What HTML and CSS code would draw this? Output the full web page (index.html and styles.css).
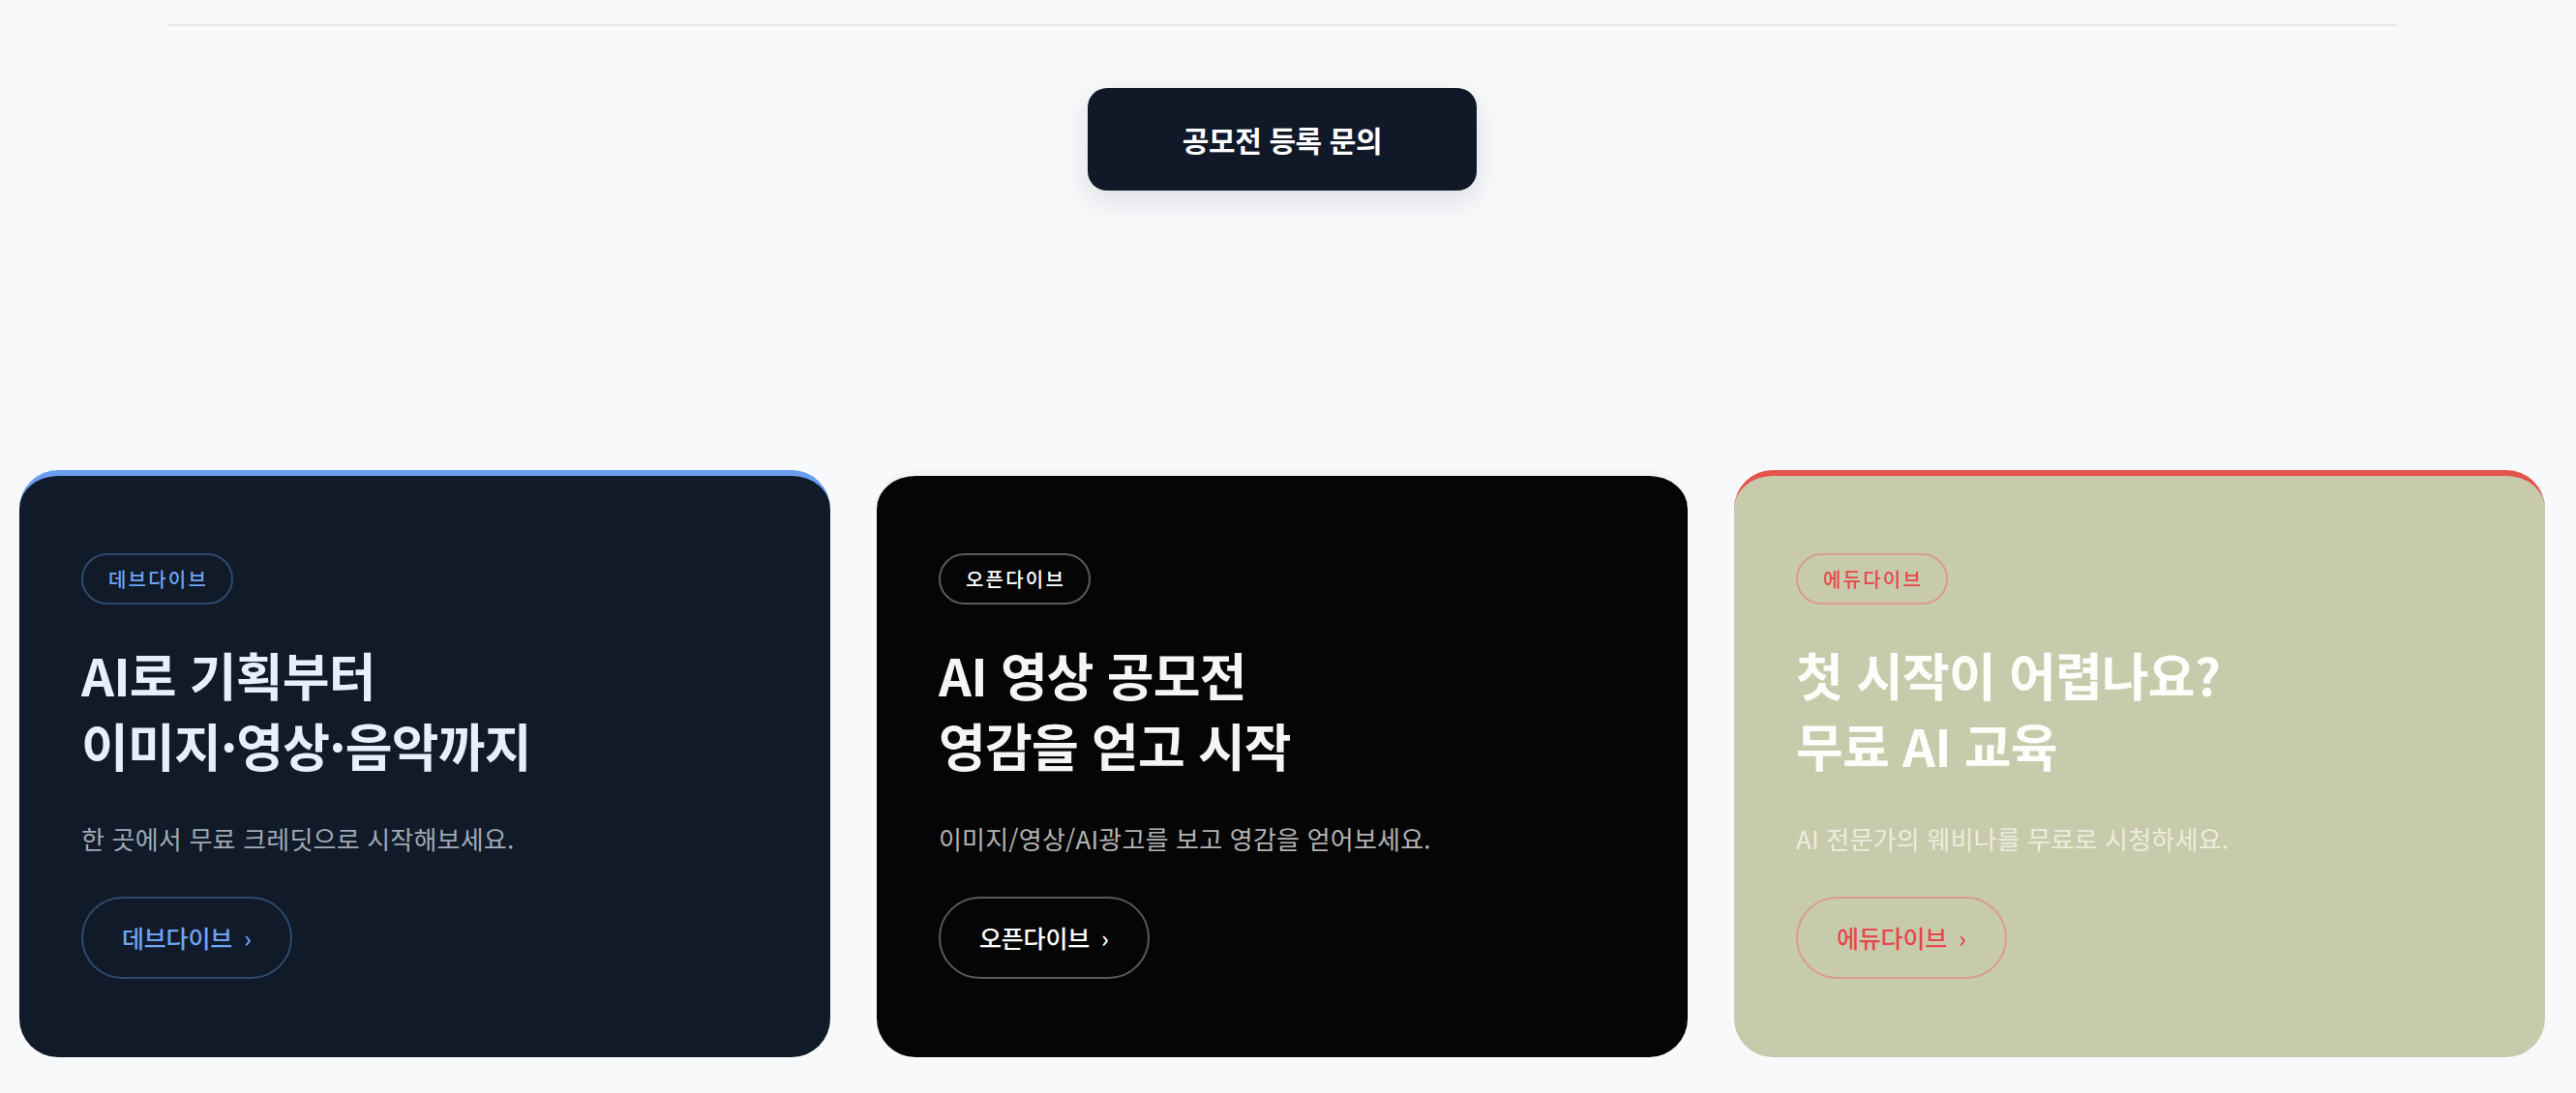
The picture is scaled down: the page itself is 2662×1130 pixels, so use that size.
FILE: index.html
```html
<!DOCTYPE html>
<html lang="ko">
<head>
<meta charset="utf-8">
<title>다이브</title>
<link rel="stylesheet" href="styles.css">
</head>
<body>
<div class="page">
  <hr class="divider">
  <div class="cta-row">
    <a class="cta" href="#">공모전 등록 문의</a>
  </div>
  <section class="cards">
    <article class="card card-dev">
      <span class="badge">데브다이브</span>
      <h2 class="title">AI로 기획부터<br>이미지·영상·음악까지</h2>
      <p class="desc">한 곳에서 무료 크레딧으로 시작해보세요.</p>
      <a class="more" href="#">데브다이브 <span class="chev">›</span></a>
    </article>
    <article class="card card-open">
      <span class="badge">오픈다이브</span>
      <h2 class="title">AI 영상 공모전<br>영감을 얻고 시작</h2>
      <p class="desc">이미지/영상/AI광고를 보고 영감을 얻어보세요.</p>
      <a class="more" href="#">오픈다이브 <span class="chev">›</span></a>
    </article>
    <article class="card card-edu">
      <span class="badge">에듀다이브</span>
      <h2 class="title">첫 시작이 어렵나요?<br>무료 AI 교육</h2>
      <p class="desc">AI 전문가의 웨비나를 무료로 시청하세요.</p>
      <a class="more" href="#">에듀다이브 <span class="chev">›</span></a>
    </article>
  </section>
</div>
</body>
</html>
```
FILE: styles.css
```css
* { box-sizing: border-box; }
html, body { margin: 0; padding: 0; }
body {
  background: #f8f9fb;
  font-family: "Noto Sans CJK KR", "Noto Sans", sans-serif;
  padding-right: 12px;
  min-height: 1130px;
}
.page {
  display: flex;
  flex-direction: column;
  align-items: center;
}
.divider {
  width: 2304px;
  margin: 25px 0 0;
  border: 0;
  border-top: 2px solid #e5e7eb;
  height: 0;
}
.cta-row {
  margin-top: 64px;
  display: flex;
  justify-content: center;
}
.cta {
  display: block;
  background: #111827;
  color: #ffffff;
  text-decoration: none;
  font-size: 30px;
  font-weight: 700;
  line-height: 42px;
  padding: 32px 98px;
  border-radius: 20px;
  box-shadow: 0 10px 30px rgba(17, 24, 39, 0.12);
  letter-spacing: -0.4px;
}
.cards {
  margin-top: 289px;
  width: 100%;
  padding: 0 20px;
  display: grid;
  grid-template-columns: repeat(3, 1fr);
  gap: 48px;
}
.card {
  border-radius: 40px;
  border-top: 6px solid;
  padding: 80px 64px 81px;
  display: flex;
  flex-direction: column;
  align-items: flex-start;
}
.badge {
  display: inline-block;
  border: 2px solid;
  border-radius: 999px;
  font-size: 20px;
  font-weight: 500;
  line-height: 25px;
  padding: 12px 24px 12px 26px;
  letter-spacing: 2.2px;
}
.title {
  margin: 36px 0 0;
  font-size: 53px;
  font-weight: 700;
  line-height: 73px;
  letter-spacing: -0.8px;
}
.desc {
  margin: 40px 0 0;
  font-size: 26px;
  font-weight: 400;
  line-height: 40px;
  letter-spacing: 0.2px;
}
.more {
  margin-top: 40px;
  display: inline-flex;
  align-items: center;
  gap: 12px;
  border: 2px solid;
  border-radius: 999px;
  padding: 22px 40px 23px;
  font-size: 25px;
  font-weight: 500;
  line-height: 36px;
  text-decoration: none;
  letter-spacing: -0.2px;
}
.chev { font-size: 25px; }

.card-dev { background: #101a28; border-top-color: #6b9ef0; }
.card-dev .badge { border-color: #2f4a6e; color: #6fa3f5; }
.card-dev .title { color: #e6effc; }
.card-dev .desc { color: #a1a9b5; }
.card-dev .more { border-color: #2f4a6e; color: #6fa3f5; }

.card-open { background: #050505; border-top-color: #f4f4f4; }
.card-open .badge { border-color: #5a5a5a; color: #ffffff; }
.card-open .title { color: #f5f5f5; }
.card-open .desc { color: #b3b3b3; }
.card-open .more { border-color: #5a5a5a; color: #ffffff; }

.card-edu { background: #c8cbab; border-top-color: #e5534b; }
.card-edu .badge { border-color: #d99c88; color: #e5484d; }
.card-edu .title { color: #fdfdfa; }
.card-edu .desc { color: #ededdf; }
.card-edu .more { border-color: #d99c88; color: #e5484d; }
```
